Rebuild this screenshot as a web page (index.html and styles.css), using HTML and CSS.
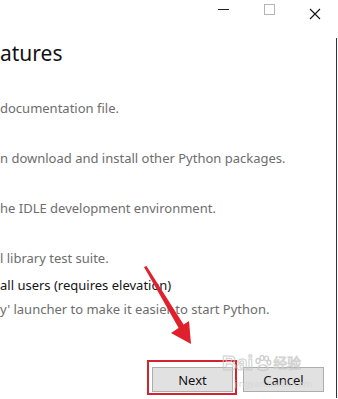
FILE: index.html
```html
<!DOCTYPE html>
<html lang="en">
<head>
    <meta charset="UTF-8">
    <title>Optional Features</title>
    <link rel="stylesheet" href="styles.css">
</head>
<body>
    <div class="window">
        <div class="title-bar">
            <span class="ctl ctl-min"></span>
            <span class="ctl ctl-max"></span>
            <span class="ctl ctl-close">
                <svg width="12" height="12" viewBox="0 0 12 12"><path d="M1 1 L11 11 M11 1 L1 11" stroke="#111" stroke-width="1.1" fill="none"/></svg>
            </span>
        </div>

        <div class="panel">
            <h1 class="heading">atures</h1>

            <div class="options">
                <div class="desc">documentation file.</div>
                <div class="desc">n download and install other Python packages.</div>
                <div class="desc">he IDLE development environment.</div>
                <div class="desc">l library test suite.</div>
                <div class="label">all users (requires elevation)</div>
                <div class="desc last">y' launcher to make it easier to start Python.</div>
            </div>

            <div class="footer">
                <span class="marked"><button class="btn">Next</button></span>
                <button class="btn">Cancel</button>
            </div>
        </div>

        <!-- annotation layer -->
        <svg class="arrow" width="60" height="90" viewBox="140 262 60 90">
            <polygon points="144,267 146.5,266 184.5,326 179.5,329.5" fill="#e0202c"/>
            <polygon points="171,333 189,321 191,344" fill="#e0202c"/>
        </svg>

        <div class="watermark">
            <div class="wm-top">
                <span class="wm-bai">Bai</span>
                <svg width="18" height="17" viewBox="0 0 18 17">
                    <g fill="none" stroke="#c8c8c8" stroke-width="1.4">
                        <ellipse cx="4" cy="6" rx="2" ry="2.5"/>
                        <ellipse cx="8" cy="3" rx="2" ry="2.4"/>
                        <ellipse cx="12.5" cy="3.5" rx="2" ry="2.4"/>
                        <ellipse cx="15" cy="7.5" rx="1.8" ry="2.2"/>
                        <path d="M4 14 C4 9 13 8 14 14 C12 16 6 16 4 14 Z"/>
                    </g>
                </svg>
                <span class="wm-cn">经验</span>
            </div>
            <div class="wm-url">jingyan.baidu.com</div>
        </div>
    </div>
</body>
</html>
```

FILE: styles.css
```css
body {
    margin: 0;
    background-color: #ffffff;
    font-family: 'Noto Sans', 'Noto Sans CJK SC', sans-serif;
    overflow: hidden;
}

.window {
    position: relative;
    width: 338px;
    height: 399px;
}

.title-bar {
    height: 19px;
    display: flex;
    align-items: flex-start;
}

.ctl {
    display: block;
}

.ctl-min {
    width: 11px;
    height: 1px;
    background-color: #222;
    margin: 9px 0 0 218px;
}

.ctl-max {
    width: 9px;
    height: 9px;
    border: 1px solid #b5b5b5;
    margin: 4px 0 0 35px;
}

.ctl-close {
    margin: 3px 0 0 34px;
    height: 12px;
}

.panel {
    width: 336px;
    border-right: 1px solid #2e3338;
}

.heading {
    margin: 19px 0 0;
    font-size: 21px;
    line-height: 30px;
    font-weight: 400;
    color: #111;
}

.options {
    margin-top: 32px;
    font-size: 13px;
    line-height: 16px;
}

.desc {
    color: #6d6d6d;
    margin-bottom: 34px;
}

.desc:nth-child(4) {
    margin-bottom: 11px;
}

.label {
    color: #141414;
    margin-bottom: 8px;
}

.desc.last {
    margin-bottom: 0;
}

.footer {
    display: flex;
    justify-content: flex-end;
    gap: 10px;
    padding: 50px 12px 6px 0;
}

.btn {
    width: 81px;
    height: 25px;
    background-color: #e1e1e1;
    border: 1px solid #adadad;
    font-family: 'Noto Sans', sans-serif;
    font-size: 13px;
    color: #111;
    padding: 0;
}

.marked {
    position: relative;
    display: block;
}

.marked::after {
    content: "";
    position: absolute;
    left: -5px;
    right: -4px;
    top: -7px;
    bottom: -3px;
    border: 2px solid #d2232e;
}

.arrow {
    position: absolute;
    left: 140px;
    top: 262px;
}

.watermark {
    position: absolute;
    left: 222px;
    top: 353px;
    color: #cfcfcf;
    opacity: 0.85;
}

.wm-top {
    display: flex;
    align-items: center;
    gap: 1px;
}

.wm-bai {
    font-family: 'Liberation Sans', sans-serif;
    font-size: 20px;
    font-weight: bold;
    line-height: 20px;
    color: transparent;
    -webkit-text-stroke: 1px #c9c9c9;
}

.wm-cn {
    font-size: 14px;
    line-height: 20px;
    color: transparent;
    -webkit-text-stroke: 0.8px #c9c9c9;
}

.wm-url {
    font-size: 9px;
    line-height: 10px;
    margin: 6px 0 0 12px;
    color: #d6d6d6;
}
```
